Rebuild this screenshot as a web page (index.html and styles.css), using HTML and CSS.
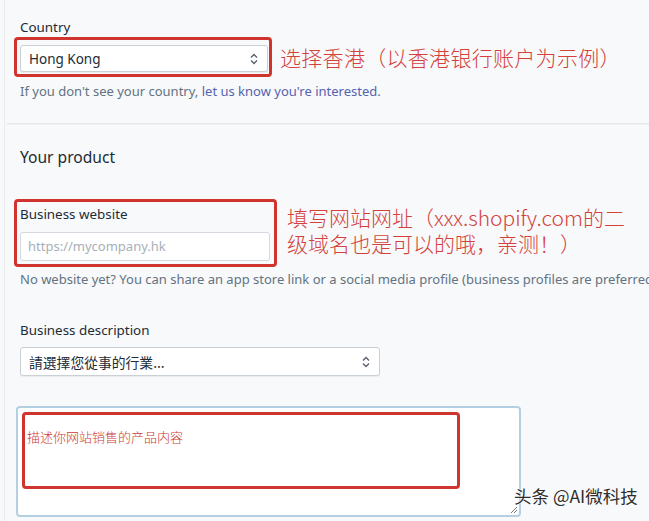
FILE: index.html
```html
<!DOCTYPE html>
<html lang="zh">
<head>
<meta charset="utf-8">
<link rel="stylesheet" href="styles.css">
</head>
<body>
<div class="page">
  <section class="sec sec-country">
    <div class="label label-country">Country</div>
    <div class="row">
      <div class="redbox box-country">
        <div class="select sel-country">
          <span>Hong Kong</span>
          <svg class="arrows" width="8" height="12" viewBox="0 0 8 12"><path d="M1 4.5 L4 1.5 L7 4.5 M1 7.5 L4 10.5 L7 7.5" fill="none" stroke="#555f6b" stroke-width="1.3"/></svg>
        </div>
      </div>
      <div class="note note1">选择香港（以香港银行账户为示例）</div>
    </div>
    <p class="help help1">If you don't see your country, <span class="link">let us know you're interested.</span></p>
  </section>
  <hr class="sep">
  <section class="sec sec-product">
    <h2 class="title">Your product</h2>
    <div class="row row2">
      <div class="redbox box-web">
        <div class="label label-web">Business website</div>
        <div class="input">https://mycompany.hk</div>
      </div>
      <div class="note note2">
        <div class="line">填写网站网址（xxx.shopify.com的二</div>
        <div class="line">级域名也是可以的哦，亲测！）</div>
      </div>
    </div>
    <p class="help help2">No website yet? You can share an app store link or a social media profile (business profiles are preferred).</p>
    <div class="label label-desc">Business description</div>
    <div class="select sel-desc">
      <span>請選擇您從事的行業...</span>
      <svg class="arrows" width="8" height="12" viewBox="0 0 8 12"><path d="M1 4.5 L4 1.5 L7 4.5 M1 7.5 L4 10.5 L7 7.5" fill="none" stroke="#555f6b" stroke-width="1.3"/></svg>
    </div>
    <div class="textarea">
      <div class="redbox box-desc">描述你网站销售的产品内容</div>
      <svg class="grip" width="10" height="10" viewBox="0 0 10 10"><path d="M9 3 L3 9 M9 6 L6 9" stroke="#777" stroke-width="1"/></svg>
    </div>
  </section>
  <div class="watermark">头条 @AI微科技</div>
</div>
</body>
</html>
```
FILE: styles.css
```css
html, body {
  margin: 0;
  padding: 0;
  background: #f8f9fa;
}
body {
  font-family: "Noto Sans", "Open Sans", "Noto Sans CJK SC", sans-serif;
  color: #212b36;
  overflow: hidden;
  height: 521px;
}
.page {
  position: relative;
  margin-left: 4px;
  border-left: 1px solid #e9ebed;
  height: 521px;
  overflow: hidden;
}
.sec {
  padding-left: 9px;
}
.sec-country {
  padding-top: 19px;
}
.label {
  font-size: 13.4px;
  line-height: 16px;
  color: #212b36;
}
.label-country {
  margin-left: 6px;
  margin-bottom: 2px;
}
.row {
  display: flex;
  align-items: center;
}
.redbox {
  box-sizing: border-box;
  border: 3px solid #cf352e;
  border-radius: 4px;
  background: transparent;
}
.box-country {
  width: 258px;
  height: 40px;
  padding: 5px 3px 2px 3px;
}
.select {
  box-sizing: border-box;
  display: flex;
  align-items: center;
  justify-content: space-between;
  background: #fff;
  border: 1px solid #c9d0d6;
  border-radius: 3px;
  box-shadow: 0 1px 1px rgba(0,0,0,0.06);
  font-size: 13.5px;
  color: #212b36;
  padding: 0 9px 0 8px;
}
.sel-country {
  width: 248px;
  height: 27px;
}
.arrows {
  display: block;
}
.note {
  font-family: "Noto Sans CJK SC", sans-serif;
  font-weight: 300;
  color: #d4413a;
  font-size: 21px;
  white-space: nowrap;
}
.note1 {
  margin-left: 8px;
  line-height: 26px;
  letter-spacing: 0.3px;
}
.help {
  margin: 0;
  font-size: 13px;
  line-height: 16px;
  color: #637381;
  white-space: nowrap;
}
.help1 {
  margin-top: 6px;
  margin-left: 6px;
}
.link {
  color: #5563b0;
}
.sep {
  margin: 24px 0 0 2px;
  border: 0;
  border-top: 1px solid #e4e7ea;
  border-bottom: 1px solid #f0f2f4;
  height: 0;
}
.sec-product {
  padding-top: 22px;
}
.title {
  margin: 0 0 0 6px;
  font-size: 15.6px;
  line-height: 20px;
  font-weight: normal;
  color: #212b36;
}
.row2 {
  margin-top: 32px;
}
.box-web {
  width: 263px;
  height: 68px;
  padding: 4px 3px 0 3px;
}
.input {
  box-sizing: border-box;
  margin-top: 10px;
  width: 250px;
  height: 29px;
  background: #fff;
  border: 1px solid #d3d9de;
  border-radius: 3px;
  font-size: 13px;
  line-height: 27px;
  color: #a7b0b9;
  padding-left: 7px;
}
.note2 {
  margin-left: 10px;
  margin-top: -6px;
}
.note2 .line {
  height: 26px;
  line-height: 26px;
}
.help2 {
  margin-top: 4px;
  margin-left: 6px;
}
.label-desc {
  margin-top: 35px;
  margin-left: 6px;
}
.sel-desc {
  margin-top: 9px;
  margin-left: 6px;
  width: 360px;
  height: 29px;
  font-family: "Noto Sans CJK TC", sans-serif;
  font-size: 13.8px;
}
.textarea {
  position: relative;
  box-sizing: border-box;
  margin-top: 30px;
  margin-left: 2px;
  width: 505px;
  height: 111px;
  background: #fff;
  border: 2px solid #b5cfe2;
  border-radius: 4px;
  padding: 4px;
}
.box-desc {
  width: 438px;
  height: 77px;
  padding: 13px 0 0 2px;
  font-family: "Noto Sans CJK SC", sans-serif;
  font-weight: 300;
  font-size: 13px;
  line-height: 18px;
  color: #cc3b34;
}
.grip {
  position: absolute;
  right: 1px;
  bottom: 1px;
}
.watermark {
  position: absolute;
  left: 509px;
  top: 484px;
  font-family: "Noto Sans CJK SC", sans-serif;
  font-size: 17.5px;
  line-height: 24px;
  color: #2e2e2e;
  text-shadow: 0 0 2px #fff, 0 0 2px #fff;
  white-space: nowrap;
}
```
